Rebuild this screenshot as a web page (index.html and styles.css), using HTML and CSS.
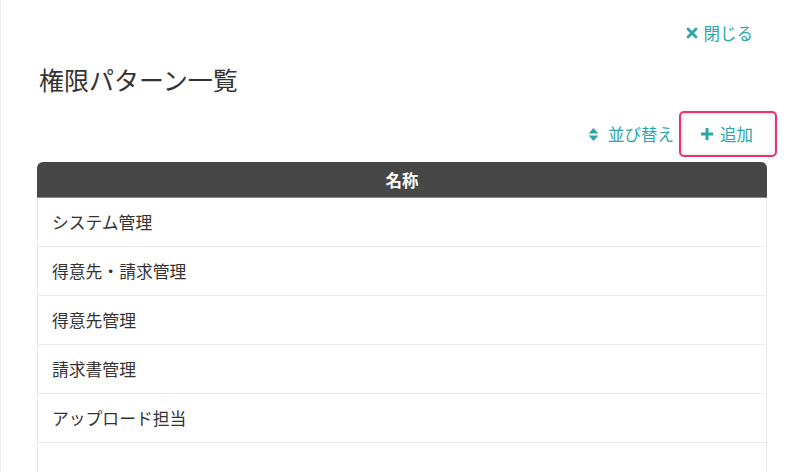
FILE: index.html
```html
<!DOCTYPE html>
<html lang="ja">
<head>
    <meta charset="UTF-8">
    <title>権限パターン一覧</title>
    <link rel="stylesheet" href="styles.css">
</head>
<body>
    <div class="panel">
        <div class="close-bar">
            <a class="link close"><svg width="12" height="12" viewBox="0 0 12 12"><path d="M2 2L10 10M10 2L2 10" stroke="currentColor" stroke-width="2.8" stroke-linecap="round"/></svg>閉じる</a>
        </div>
        <h2 class="title">権限パターン一覧</h2>
        <div class="toolbar">
            <a class="link sort"><svg width="11" height="15" viewBox="0 0 10 14"><path d="M5 1L9.5 6H0.5Z M5 13L9.5 8H0.5Z" fill="currentColor"/></svg>並び替え</a>
            <a class="link add"><svg width="14" height="14" viewBox="0 0 14 14"><path d="M7 1V13M1 7H13" stroke="currentColor" stroke-width="3"/></svg>追加</a>
        </div>
        <table class="list">
            <thead>
                <tr><th>名称</th></tr>
            </thead>
            <tbody>
                <tr><td>システム管理</td></tr>
                <tr><td>得意先・請求管理</td></tr>
                <tr><td>得意先管理</td></tr>
                <tr><td>請求書管理</td></tr>
                <tr><td>アップロード担当</td></tr>
                <tr><td>&nbsp;</td></tr>
            </tbody>
        </table>
    </div>
</body>
</html>
```

FILE: styles.css
```css
body {
    margin: 0;
    background: #fff;
    font-family: "Noto Sans CJK JP", "Noto Sans", sans-serif;
    color: #333;
    overflow: hidden;
}
.panel {
    border-left: 1px solid #eee;
    height: 472px;
    padding: 0 33px 0 36px;
}
.close-bar {
    display: flex;
    justify-content: flex-end;
    padding: 19px 14px 0 0;
    height: 27px;
}
.link {
    color: #2aa5a8;
    font-size: 16.5px;
    display: flex;
    align-items: center;
    cursor: pointer;
}
.close svg {
    margin-right: 6px;
}
.title {
    font-size: 25px;
    font-weight: normal;
    margin: 16px 0 0 2px;
    line-height: 34px;
    color: #333;
}
.toolbar {
    display: flex;
    justify-content: flex-end;
    align-items: center;
    margin-top: 15px;
    height: 46px;
    margin-right: -10px;
}
.sort svg {
    margin-right: 9px;
}
.add {
    margin-left: 5px;
    height: 42px;
    padding: 0 22px 0 19px;
    border: 2px solid #f0306e;
    border-radius: 5px;
    box-shadow: inset 0 0 4px rgba(0, 0, 0, 0.15);
}
.add svg {
    margin-right: 6px;
}
.list {
    width: 730px;
    border-collapse: separate;
    border-spacing: 0;
    margin-top: 5px;
}
.list th {
    background: #474747;
    color: #fff;
    font-weight: bold;
    font-size: 16.5px;
    height: 35px;
    padding: 0;
    border-radius: 6px 6px 0 0;
    border-bottom: 1px solid #888;
}
.list td {
    height: 48px;
    padding: 0 0 0 14px;
    font-size: 16.8px;
    border-left: 1px solid #e8e8e8;
    border-right: 1px solid #e8e8e8;
    border-bottom: 1px solid #eaeaea;
}
```
